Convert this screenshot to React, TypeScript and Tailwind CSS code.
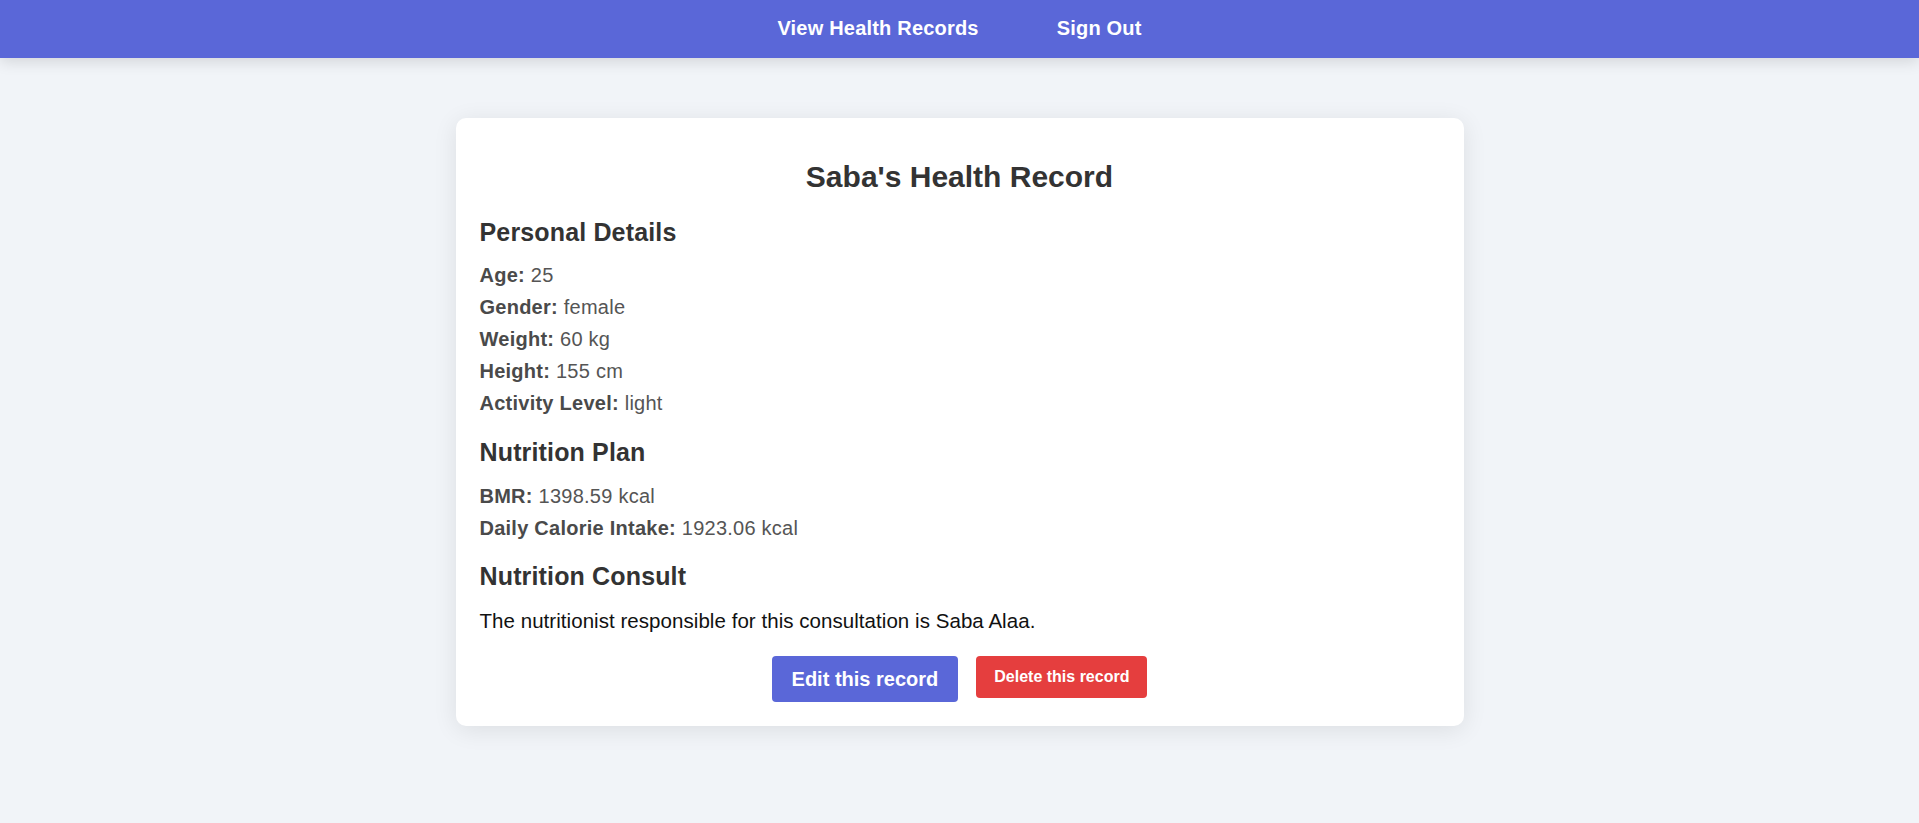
const record = {
  name: "Saba",
  age: 25,
  gender: "female",
  weight: "60 kg",
  height: "155 cm",
  activity: "light",
  bmr: "1398.59 kcal",
  calories: "1923.06 kcal",
  nutritionist: "Saba Alaa",
}

function Field({ label, value }: { label: string; value: string | number }) {
  return (
    <p className="text-[20px] leading-[32px] tracking-[0.25px] text-[#555]">
      <strong className="font-bold text-[#4a4a4a]">{label}:</strong> {value}
    </p>
  )
}

function SectionTitle({ children, className = "" }: { children: string; className?: string }) {
  return (
    <h2 className={`text-[25px] leading-[30px] font-bold tracking-[0.15px] text-[#333] ${className}`}>
      {children}
    </h2>
  )
}

export default function App() {
  return (
    <div className="min-h-[823px] bg-[#f1f4f8] font-['Liberation_Sans',Arial,sans-serif]">
      <nav className="relative z-10 h-[58px] bg-[#5a67d8] pt-4 shadow-[0_4px_14px_rgba(0,0,0,0.12)]">
        <ul className="flex justify-center gap-[78px] text-[20px] leading-6 font-bold tracking-[0.2px] text-white">
          <li>
            <a href="#">View Health Records</a>
          </li>
          <li>
            <a href="#">Sign Out</a>
          </li>
        </ul>
      </nav>

      <main className="flex justify-center pt-[60px]">
        <div className="w-[1008px] rounded-[10px] bg-white px-6 pt-6 pb-6 shadow-[0_4px_24px_rgba(0,0,0,0.09)]">
          <h1 className="mt-[17px] text-center text-[30px] leading-9 font-bold text-[#333]">
            {record.name}'s Health Record
          </h1>

          <SectionTitle className="mt-[22px]">Personal Details</SectionTitle>
          <div className="mt-[12px]">
            <Field label="Age" value={record.age} />
            <Field label="Gender" value={record.gender} />
            <Field label="Weight" value={record.weight} />
            <Field label="Height" value={record.height} />
            <Field label="Activity Level" value={record.activity} />
          </div>

          <SectionTitle className="mt-[18px]">Nutrition Plan</SectionTitle>
          <div className="mt-[13px]">
            <Field label="BMR" value={record.bmr} />
            <Field label="Daily Calorie Intake" value={record.calories} />
          </div>

          <SectionTitle className="mt-[17px]">Nutrition Consult</SectionTitle>
          <p className="mt-[14px] text-[20.5px] leading-[31.6px] tracking-[0.05px] text-[#111]">
            The nutritionist responsible for this consultation is {record.nutritionist}.
          </p>

          <div className="mt-[19px] flex items-start justify-center gap-[18px]">
            <button className="rounded-[4px] bg-[#5a67d8] px-5 py-2.5 text-[20px] leading-[26px] font-bold text-white">
              Edit this record
            </button>
            <button className="rounded-[4px] bg-[#e53e3e] px-[18px] py-2.5 text-[16px] leading-[22px] font-bold text-white">
              Delete this record
            </button>
          </div>
        </div>
      </main>
    </div>
  )
}
